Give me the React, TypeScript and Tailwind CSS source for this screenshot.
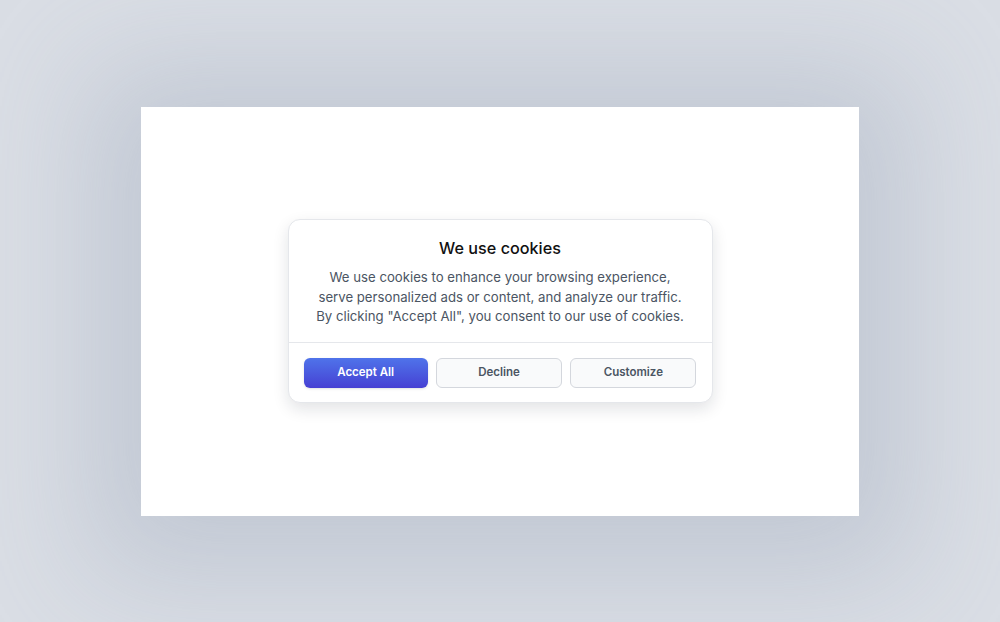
export default function App() {
  return (
    <div
      className="flex h-[622px] w-[1000px] items-center justify-center overflow-hidden bg-[#dadee5]"
      style={{ fontFamily: "Inter, 'Noto Sans', sans-serif" }}
    >
      <div className="flex h-[409px] w-[718px] items-center justify-center bg-white shadow-[0_10px_110px_50px_rgba(150,160,180,0.35)]">
        <div className="w-[425px] rounded-xl border border-[#e5e7eb] bg-white shadow-[0_6px_16px_rgba(15,23,42,0.12)]">
          <div className="px-4 pb-[15px] pt-[18px] text-center">
            <h2 className="text-[16.2px] font-medium leading-[20px] text-[#111111]">We use cookies</h2>
            <p className="mt-[10px] text-[13.2px] leading-[19.5px] text-[#4b5563]">
              We use cookies to enhance your browsing experience,
              <br />
              serve personalized ads or content, and analyze our traffic.
              <br />
              By clicking "Accept All", you consent to our use of cookies.
            </p>
          </div>
          <div className="flex gap-2 border-t border-[#e5e7eb] px-[15px] pb-[14px] pt-[15px]">
            <button className="h-[30px] flex-1 rounded-md bg-gradient-to-b from-[#4f73ea] to-[#463fd3] text-[11.5px] font-semibold text-white shadow-sm">
              Accept All
            </button>
            <button className="h-[30px] flex-1 rounded-md border border-[#d4d7dd] bg-[#f9fafb] text-[11.5px] font-semibold text-[#4b5563]">
              Decline
            </button>
            <button className="h-[30px] flex-1 rounded-md border border-[#d4d7dd] bg-[#f9fafb] text-[11.5px] font-semibold text-[#4b5563]">
              Customize
            </button>
          </div>
        </div>
      </div>
    </div>
  )
}
